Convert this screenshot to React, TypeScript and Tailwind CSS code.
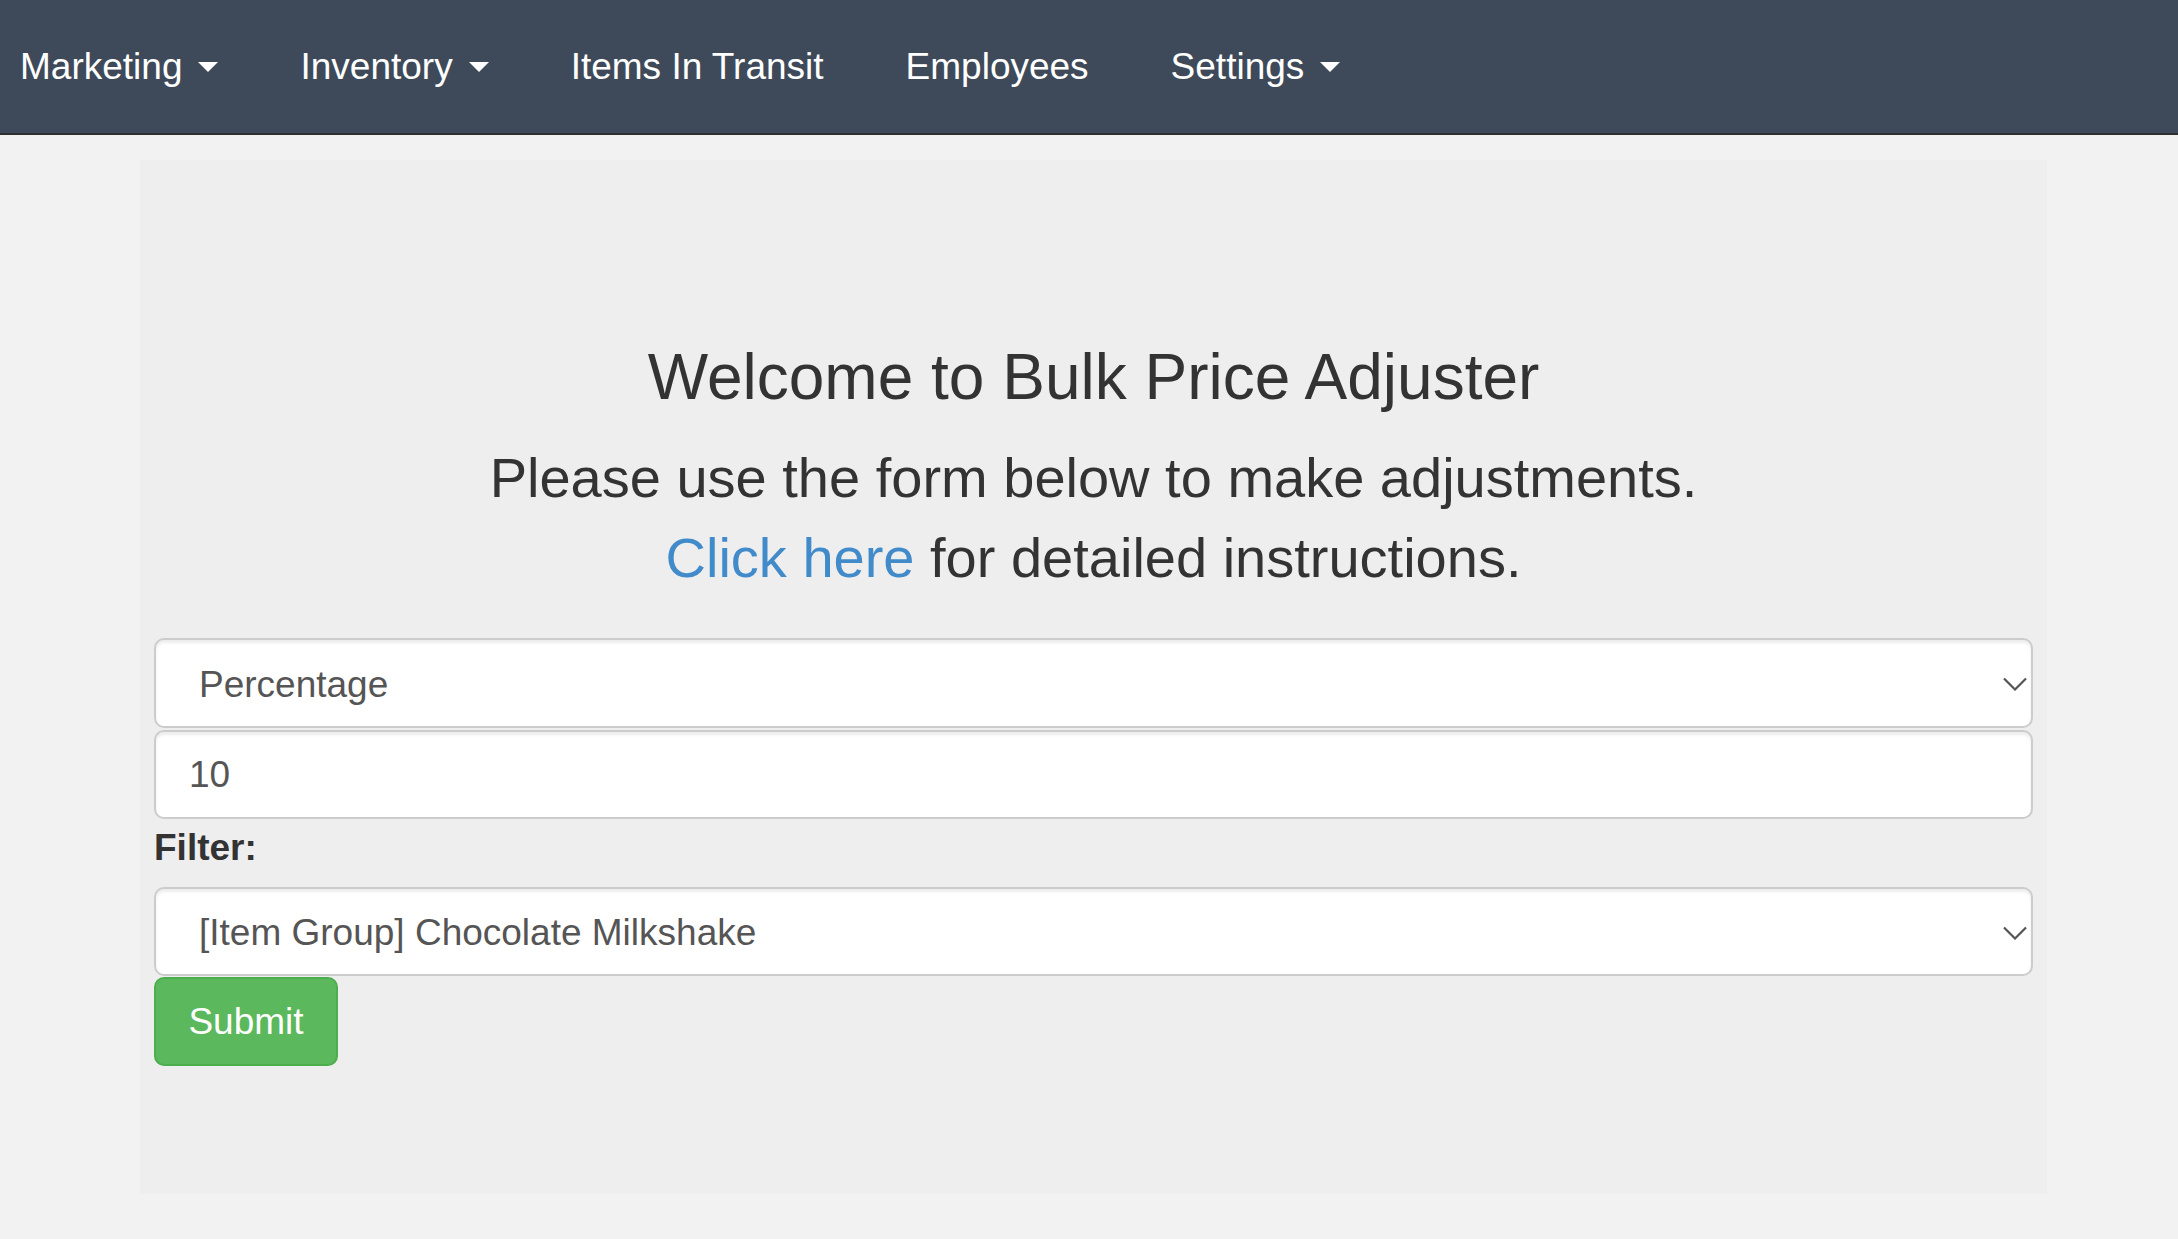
import type { ReactNode } from 'react'

interface NavItemProps {
  label: string
  dropdown?: boolean
}

function NavItem({ label, dropdown }: NavItemProps) {
  return (
    <a className="flex items-center text-white leading-[53px]" href="#">
      {label}
      {dropdown && (
        <span className="ml-[16px] inline-block h-0 w-0 border-x-[10px] border-t-[10px] border-x-transparent border-t-white" />
      )}
    </a>
  )
}

function Chevron() {
  return (
    <svg width="24" height="14" viewBox="0 0 24 14" className="shrink-0">
      <polyline
        points="1,1.5 12,12.5 23,1.5"
        fill="none"
        stroke="#555"
        strokeWidth="2.2"
      />
    </svg>
  )
}

function FakeSelect({ children, className }: { children: ReactNode; className?: string }) {
  return (
    <div
      className={`flex items-center justify-between rounded-[10px] border-2 border-[#ccc] bg-white pl-[43px] pr-[4px] pt-[2px] text-[37px] text-[#555] shadow-[inset_0_3px_3px_rgba(0,0,0,0.075)] ${className ?? ''}`}
    >
      <span>{children}</span>
      <Chevron />
    </div>
  )
}

export default function App() {
  return (
    <div className="min-h-screen bg-[#f2f2f2] font-['Liberation_Sans',Arial,sans-serif] text-[#333]">
      <nav className="flex h-[135px] items-center gap-[82px] border-b-2 border-[#2f2f2f] bg-[#3e4a59] pl-[20px] text-[37px]">
        <NavItem label="Marketing" dropdown />
        <NavItem label="Inventory" dropdown />
        <NavItem label="Items In Transit" />
        <NavItem label="Employees" />
        <NavItem label="Settings" dropdown />
      </nav>

      <div className="pl-[140px] pt-[25px]">
        <div className="w-[1907px] bg-[#eeeeee] px-[14px] pt-[182px] pb-[128px]">
          <h1 className="text-center text-[64px] leading-[1.1]">
            Welcome to Bulk Price Adjuster
          </h1>
          <p className="mt-[26px] text-center text-[56px] leading-[80px]">
            Please use the form below to make adjustments.
            <br />
            <a href="#" className="text-[#428bca]">
              Click here
            </a>{' '}
            for detailed instructions.
          </p>

          <form className="mt-[40px] flex flex-col">
            <FakeSelect className="h-[90px]">Percentage</FakeSelect>
            <input
              type="text"
              defaultValue="10"
              className="mt-[2px] h-[89px] rounded-[10px] border-2 border-[#ccc] bg-white pl-[33px] text-[37px] text-[#555] shadow-[inset_0_3px_3px_rgba(0,0,0,0.075)] outline-none"
            />
            <label className="mt-[2px] mb-[13px] text-[37px] font-bold leading-[53px]">
              Filter:
            </label>
            <FakeSelect className="h-[89px]">[Item Group] Chocolate Milkshake</FakeSelect>
            <div className="mt-[1px]">
              <button
                type="button"
                className="h-[89px] w-[184px] rounded-[10px] border-2 border-[#4cae4c] bg-[#5cb85c] text-[37px] text-white"
              >
                Submit
              </button>
            </div>
          </form>
        </div>
      </div>
    </div>
  )
}
